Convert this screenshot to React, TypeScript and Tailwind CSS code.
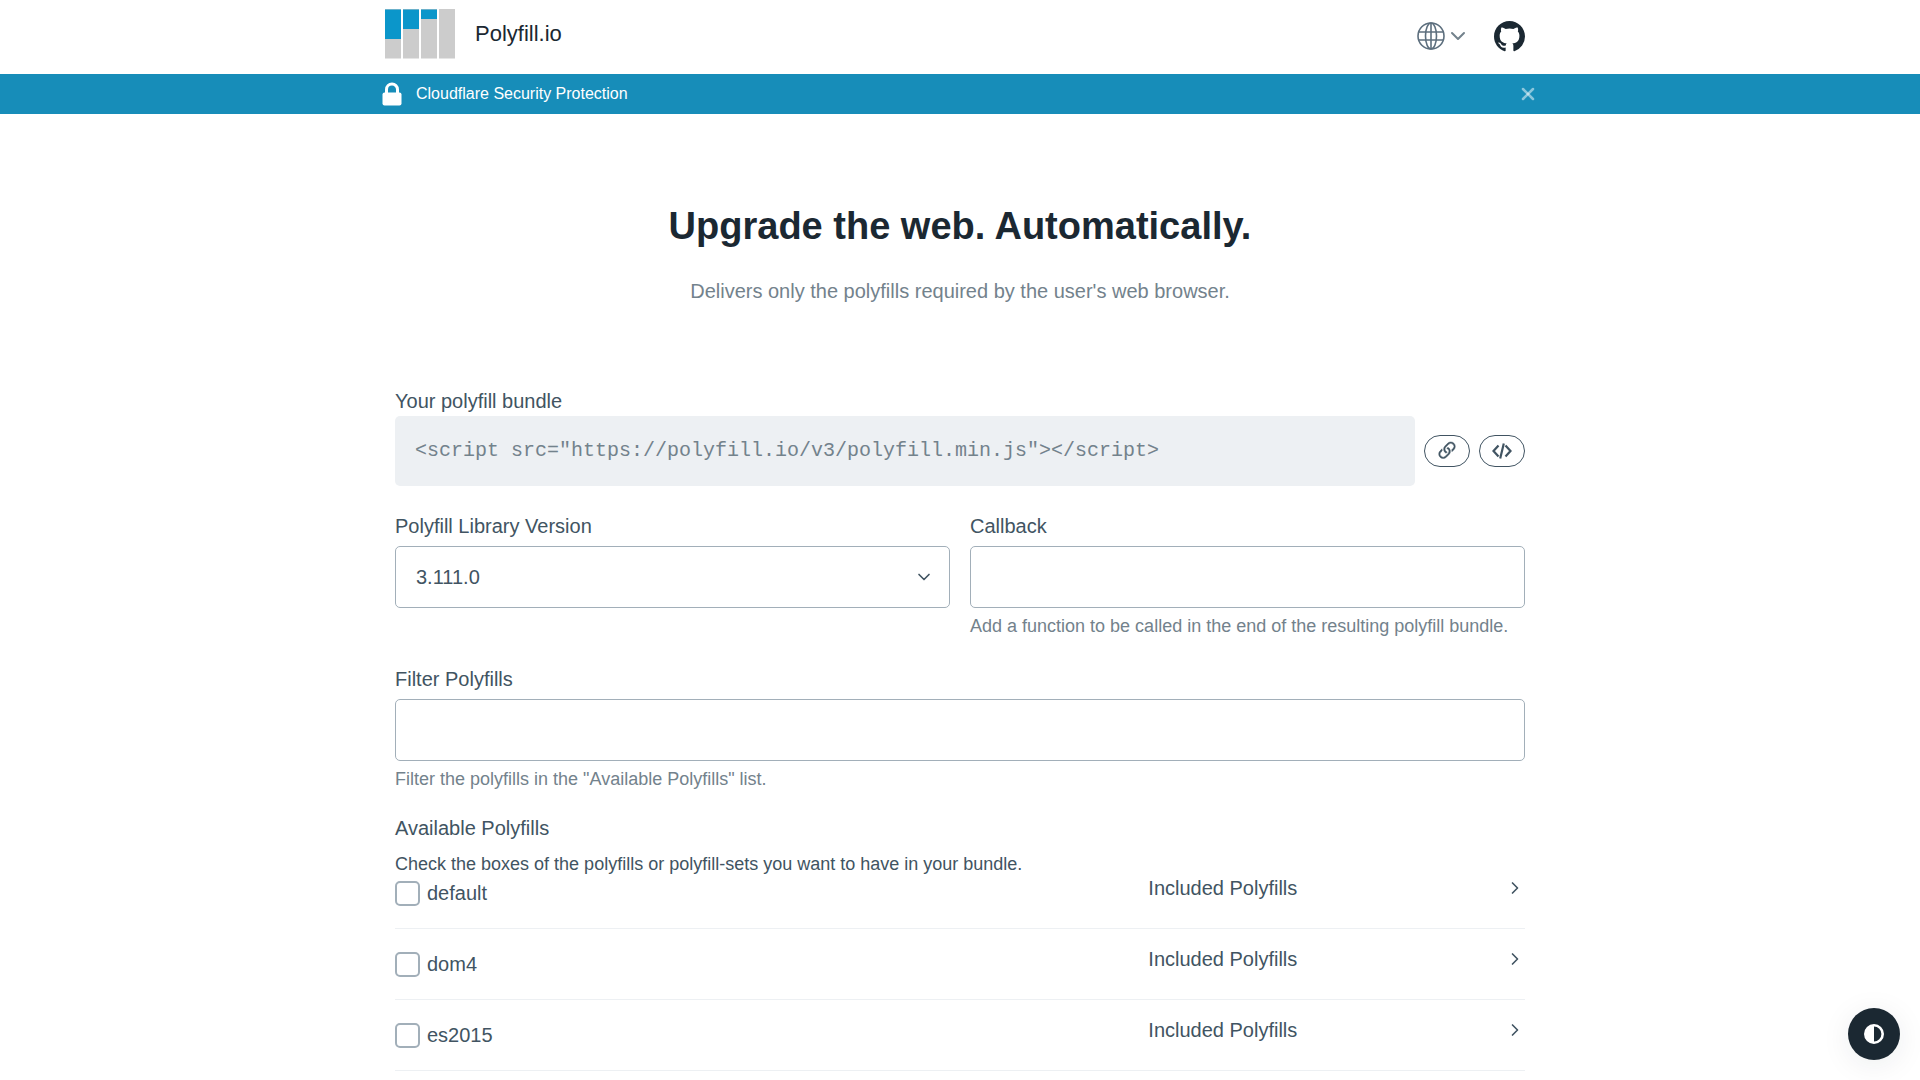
import { useState } from "react"
import { clsx } from "clsx"
import { ChevronDown, ChevronRight, X } from "lucide-react"

const polyfills = ["default", "dom4", "es2015"]

const inputStyle =
    "h-[62px] w-full rounded-[5px] border border-[#a2afb9] bg-white px-5 text-xl text-[#415462] outline-none"

const Logo = () => (
    <svg width="70" height="50" viewBox="0 0 70 50" aria-hidden="true">
        <path fill="#ccc" d="M0 0h16v49.500H0zM18 0h16v49.500H18zM36 0h16v49.500H36zM54 0h16v49.500H54z" />
        <path fill="#0b96ca" d="M0 .5h16V30H0zM18 .5h16V20H18zM36 .5h16V10H36z" />
    </svg>
)

const Globe = () => (
    <svg width="28" height="28" viewBox="0 0 28 28" fill="none" stroke="#5d6f7e" strokeWidth="1.600" aria-hidden="true">
        <circle cx="14" cy="14" r="13" />
        <ellipse cx="14" cy="14" rx="5.500" ry="13" />
        <path d="M14 1v26M2 10h24M2 18h24" />
    </svg>
)

const GitHub = () => (
    <svg width="31" height="31" viewBox="0 0 16 16" fill="#1b2832" aria-hidden="true">
        <path d="M8 0C3.580 0 0 3.580 0 8c0 3.540 2.290 6.530 5.470 7.590.4.070.55-.17.55-.38 0-.19-.01-.82-.01-1.490-2.010.37-2.530-.49-2.690-.94-.09-.23-.48-.94-.82-1.130-.28-.15-.68-.52-.01-.53.63-.01 1.080.58 1.230.82.72 1.210 1.870.87 2.330.66.070-.52.28-.87.51-1.070-1.780-.2-3.640-.89-3.640-3.950 0-.87.31-1.590.82-2.150-.08-.2-.36-1.020.08-2.120 0 0 .67-.21 2.200.82.64-.18 1.320-.27 2-.27s1.360.09 2 .27c1.530-1.040 2.200-.82 2.200-.82.44 1.100.16 1.920.08 2.120.51.56.82 1.270.82 2.150 0 3.070-1.870 3.750-3.650 3.950.29.25.54.73.54 1.480 0 1.070-.01 1.930-.01 2.200 0 .21.15.46.55.38A8.010 8.010 0 0 0 16 8c0-4.420-3.580-8-8-8z" />
    </svg>
)

const Lock = () => (
    <svg width="20" height="24" viewBox="0 0 20 24" fill="none" aria-hidden="true">
        <path d="M4.500 12V7.500a5.500 5.500 0 0 1 11 0V12" stroke="#fff" strokeWidth="3" />
        <rect x=".5" y="10.500" width="19" height="13" rx="2" fill="#fff" />
    </svg>
)

const LinkIcon = () => (
    <svg width="24" height="24" viewBox="0 0 16 16" fill="currentColor" aria-hidden="true">
        <path d="M4.715 6.542 3.343 7.914a3 3 0 1 0 4.243 4.243l1.828-1.829A3 3 0 0 0 8.586 5.500L8 6.086a1 1 0 0 0-.154.199 2 2 0 0 1 .861 3.337L6.880 11.450a2 2 0 1 1-2.830-2.830l.793-.792a4 4 0 0 1-.128-1.287z" stroke="currentColor" strokeWidth=".3" />
        <path d="M6.586 4.672A3 3 0 0 0 7.414 9.500l.775-.776a2 2 0 0 1-.896-3.346L9.120 3.550a2 2 0 1 1 2.830 2.830l-.793.792c.112.42.155.855.128 1.287l1.372-1.372a3 3 0 1 0-4.243-4.243z" stroke="currentColor" strokeWidth=".3" />
    </svg>
)

const CodeIcon = () => (
    <svg width="20" height="16" viewBox="0 0 20 16" fill="none" stroke="currentColor" strokeWidth="2.200" aria-hidden="true">
        <path d="M6.500 2.500 1.500 8l5 5.500M13.500 2.500l5 5.500-5 5.500M11.800.5l-3.600 15" />
    </svg>
)

const PolyfillRow = ({ name }: { name: string }) => {
    const [open, setOpen] = useState(false)

    return (
        <li className="flex items-start border-b border-[#edf0f3] pb-[22px] [&+li]:pt-[23px]">
            <label className="flex flex-1 items-center gap-[7px]">
                <input
                    type="checkbox"
                    name={name}
                    className="size-[25px] appearance-none rounded-[5px] border-2 border-[#a2afb9] bg-white checked:bg-[#1095c1]"
                />
                <span className="leading-[25px]">{name}</span>
            </label>
            <button
                type="button"
                aria-expanded={open}
                onClick={() => setOpen(!open)}
                className="flex h-[14px] w-1/3 items-center justify-between"
            >
                Included Polyfills
                <ChevronRight size={20} strokeWidth={2} className={clsx(open && "rotate-90")} />
            </button>
        </li>
    )
}

export default function App() {
    const [showBanner, setShowBanner] = useState(true)

    return (
        <div className="min-h-screen bg-white font-['Liberation_Sans',Arial,sans-serif] text-xl text-[#415462]">
            <header className="mx-auto flex h-[74px] max-w-[1150px] items-center justify-between pr-[10px] pb-1.5">
                <a href="#" className="flex items-center gap-5 text-[22px] text-[#1b2832]">
                    <Logo />
                    Polyfill.io
                </a>
                <nav className="flex items-center gap-6 pt-1">
                    <button type="button" aria-label="Language" className="flex items-center gap-px text-[#73828c]">
                        <Globe />
                        <ChevronDown size={24} strokeWidth={2} />
                    </button>
                    <a href="#github" aria-label="GitHub">
                        <GitHub />
                    </a>
                </nav>
            </header>

            {showBanner && (
                <div className="bg-[#178db9] text-white">
                    <div className="mx-auto flex h-10 max-w-[1156px] items-center">
                        <Lock />
                        <p className="ml-3.5 flex-1 text-base">Cloudflare Security Protection</p>
                        <button type="button" aria-label="Close" onClick={() => setShowBanner(false)} className="text-white/50">
                            <X size={20} strokeWidth={3} />
                        </button>
                    </div>
                </div>
            )}

            <main className="mx-auto max-w-[1130px]">
                <div className="pt-[87px] text-center">
                    <h1 className="text-[38px] leading-[50px] font-bold text-[#1b2832]">Upgrade the web. Automatically.</h1>
                    <p className="mt-[25px] leading-[30px] text-[#73828c]">
                        Delivers only the polyfills required by the user's web browser.
                    </p>
                </div>

                <form onSubmit={(e) => e.preventDefault()}>
                    <h2 className="mt-20 leading-[30px]">Your polyfill bundle</h2>
                    <div className="flex items-center gap-[9px]">
                        <pre className="h-[70px] flex-1 overflow-hidden rounded-[5px] bg-[#edf0f3] px-5 pt-5 font-['Liberation_Mono',monospace] leading-[30px] text-[#73828c]">
                            <code>{'<script src="https://polyfill.io/v3/polyfill.min.js"></script>'}</code>
                        </pre>
                        <button
                            type="button"
                            aria-label="Copy link"
                            className="flex h-8 w-[46px] items-center justify-center rounded-full border border-[#415462]"
                        >
                            <LinkIcon />
                        </button>
                        <button
                            type="button"
                            aria-label="Copy script tag"
                            className="flex h-8 w-[46px] items-center justify-center rounded-full border border-[#415462]"
                        >
                            <CodeIcon />
                        </button>
                    </div>

                    <div className="mt-[25px] grid grid-cols-2 gap-5">
                        <div>
                            <label htmlFor="version" className="mb-[5px] block leading-[30px]">
                                Polyfill Library Version
                            </label>
                            <div className="relative">
                                <select id="version" className={clsx(inputStyle, "appearance-none")}>
                                    <option>3.111.0</option>
                                </select>
                                <ChevronDown
                                    size={20}
                                    strokeWidth={2}
                                    className="pointer-events-none absolute inset-y-0 right-4 my-auto"
                                />
                            </div>
                        </div>
                        <div>
                            <label htmlFor="callback" className="mb-[5px] block leading-[30px]">
                                Callback
                            </label>
                            <input id="callback" type="text" className={inputStyle} />
                            <p className="mt-[5px] text-lg leading-[26px] text-[#73828c]">
                                Add a function to be called in the end of the resulting polyfill bundle.
                            </p>
                        </div>
                    </div>

                    <label htmlFor="filter" className="mt-[25px] mb-[5px] block leading-[30px]">
                        Filter Polyfills
                    </label>
                    <input id="filter" type="text" className={inputStyle} />
                    <p className="mt-[5px] text-lg leading-[26px] text-[#73828c]">
                        Filter the polyfills in the "Available Polyfills" list.
                    </p>

                    <h2 className="mt-[21px] leading-[30px]">Available Polyfills</h2>
                    <p className="mt-2 text-lg leading-[26px]">
                        Check the boxes of the polyfills or polyfill-sets you want to have in your bundle.
                    </p>
                    <ul className="mt-1">
                        {polyfills.map((name) => (
                            <PolyfillRow key={name} name={name} />
                        ))}
                    </ul>
                </form>
            </main>

            <button
                type="button"
                aria-label="Toggle theme"
                className="fixed right-5 bottom-5 flex size-[52px] items-center justify-center rounded-full bg-[#1b2832] shadow-[0_5px_30px_rgba(27,40,50,0.08)]"
            >
                <svg width="20" height="20" viewBox="0 0 20 20" aria-hidden="true">
                    <circle cx="10" cy="10" r="8.700" fill="none" stroke="#fff" strokeWidth="2.600" />
                    <path d="M10 1a9 9 0 0 0 0 18z" fill="#fff" />
                </svg>
            </button>
        </div>
    )
}
